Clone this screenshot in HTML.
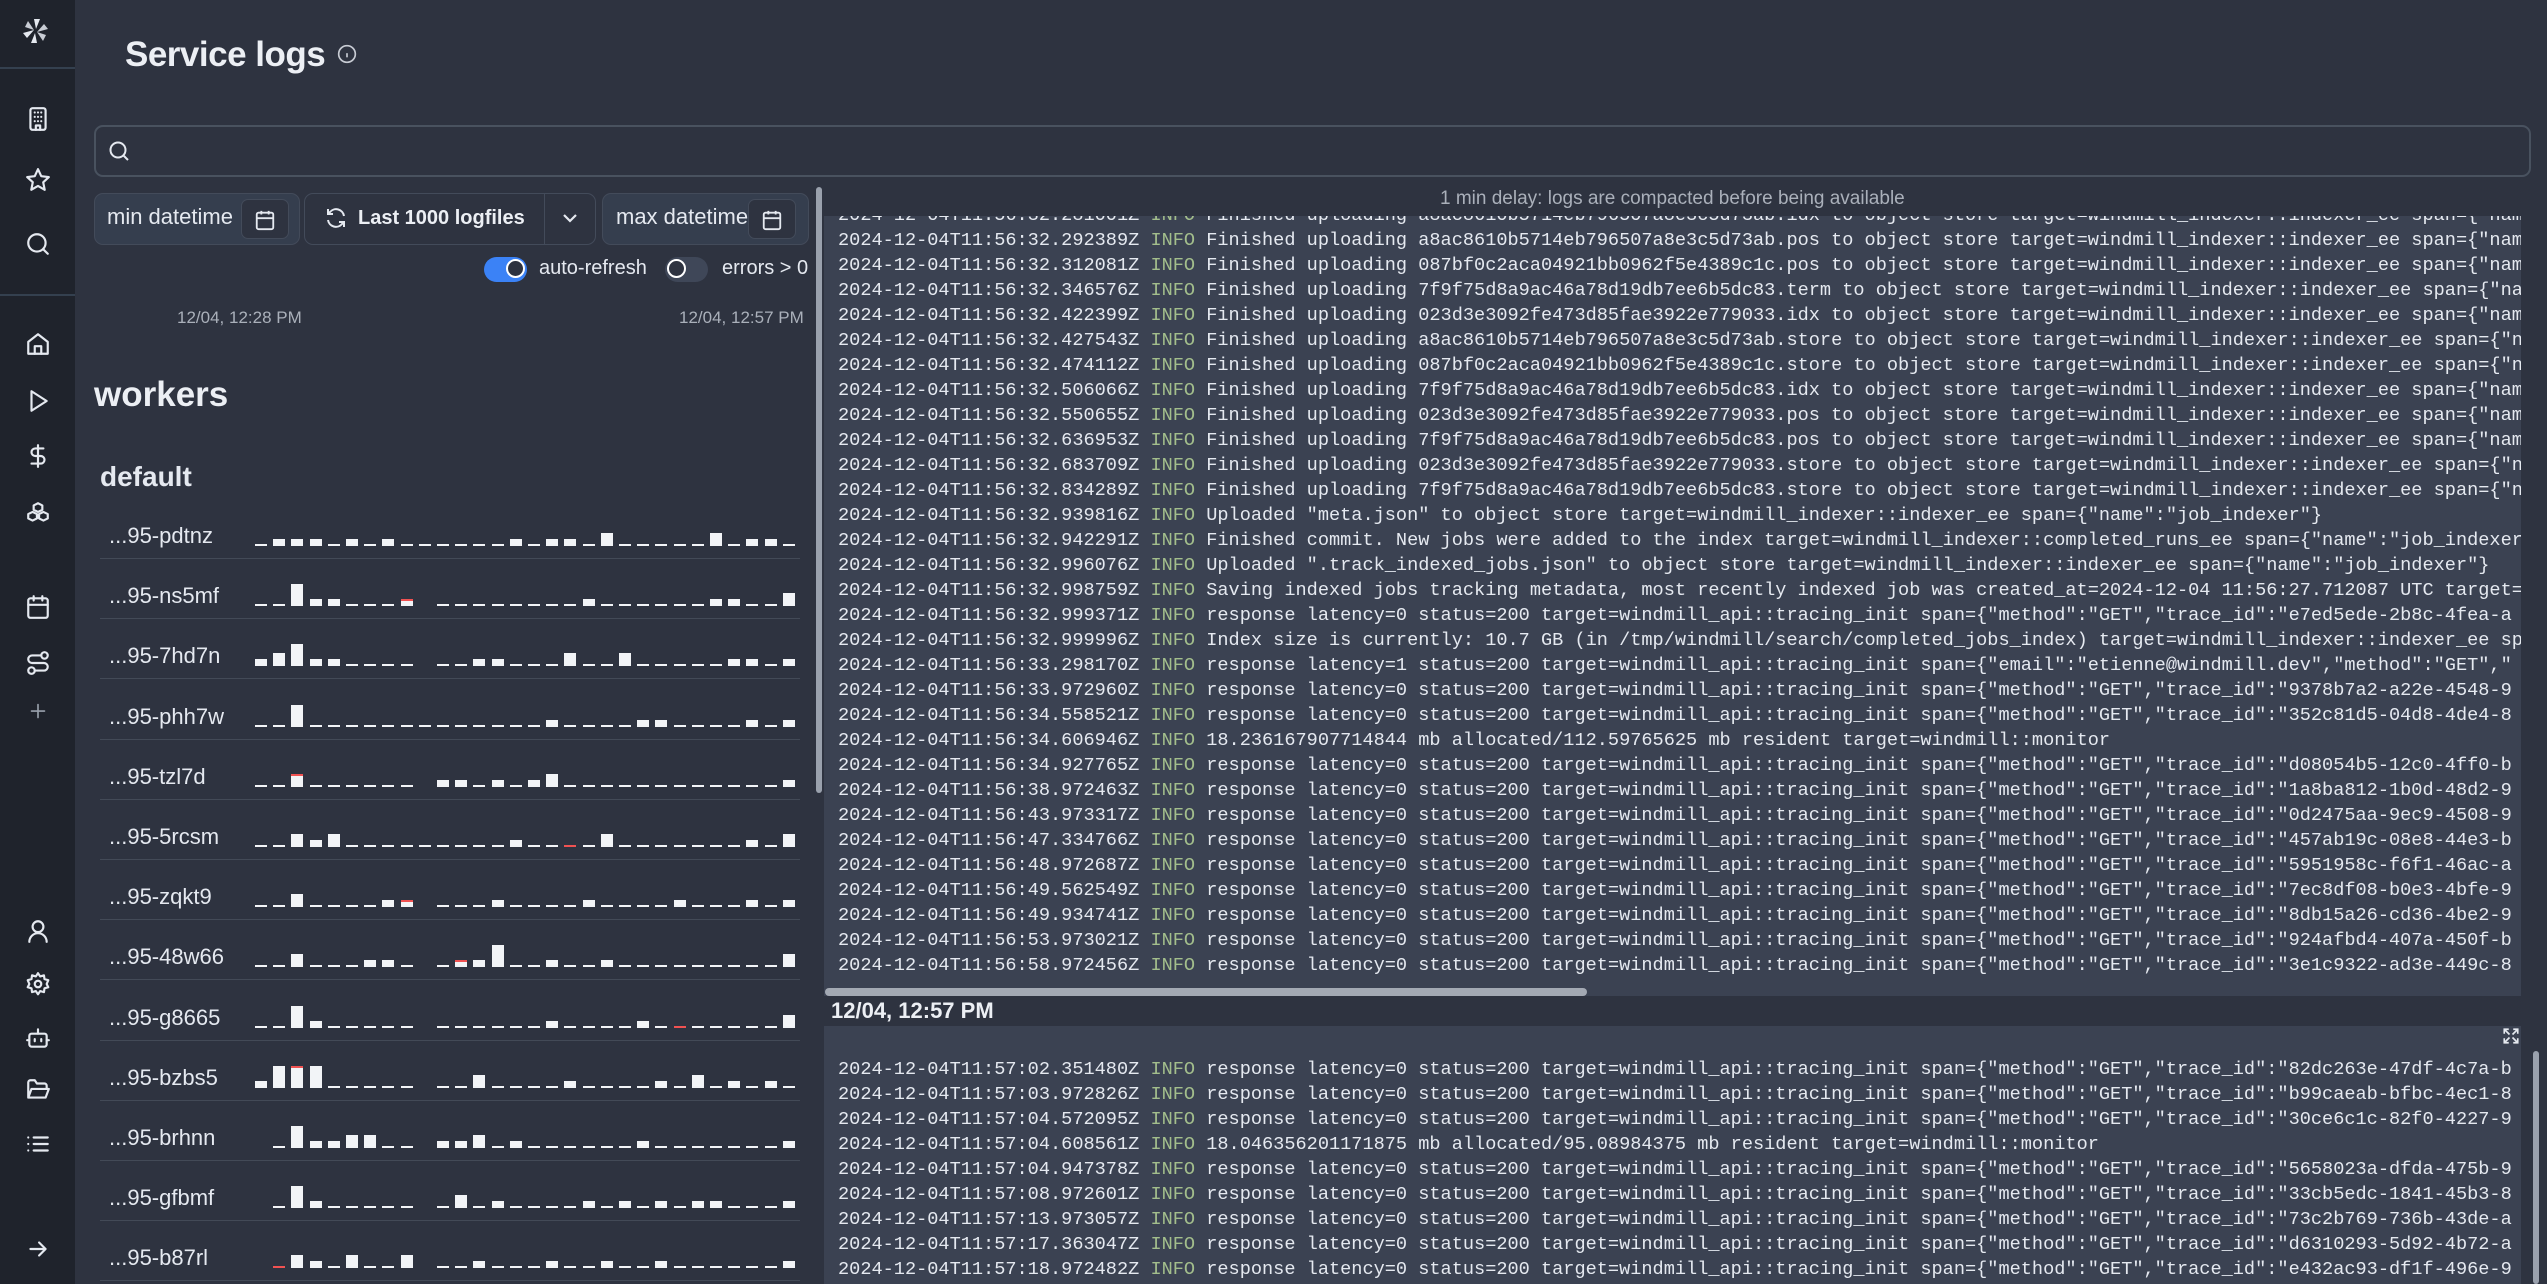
<!DOCTYPE html>
<html><head><meta charset="utf-8">
<style>
*{box-sizing:border-box;margin:0;padding:0}
html,body{width:2547px;height:1284px;overflow:hidden;background:#2e3340;font-family:"Liberation Sans",sans-serif;color:#eceff4}
#side{position:absolute;left:0;top:0;width:75px;height:1284px;background:#1f232c}
.sep{position:absolute;left:0;width:75px;height:2px;background:#34404f}
.ic{position:absolute;left:25px;width:26px;height:26px}
.ic svg{width:26px;height:26px;fill:none;stroke:#e5e9f0;stroke-width:2;stroke-linecap:round;stroke-linejoin:round}
.abs{position:absolute}
.box{position:absolute;border:1.5px solid #434b5a;border-radius:9px;background:#353e4e}
.cal{position:absolute;width:48px;height:40px;border:1.5px solid #434b5a;border-radius:7px;background:#2e3340}
.cal svg{position:absolute;left:12px;top:9px;width:22px;height:22px;fill:none;stroke:#e5e9f0;stroke-width:2}
.wname{position:absolute;left:109px;font-size:22px;color:#e5e9f0}
.wline{position:absolute;left:100px;width:700px;height:1px;background:#434a57}
.log{position:absolute;left:824px;width:1697px;background:#3b4252;overflow:hidden;font-family:"Liberation Mono",monospace;font-size:18.6px;line-height:25px;color:#e5e9f0;white-space:normal}
.log div{padding-left:14px;height:25px;white-space:pre}
.g{color:#a3be8c}
</style></head><body>
<div id="side">
 <svg class="abs" style="left:20px;top:15px" width="32" height="32" viewBox="0 0 32 32"><g fill="#e5e9f0"><path d="M14 4l6 0 -4 10z"/><path d="M24 9l4 5 -11 3z" fill="#c8ccd4"/><path d="M26 20l-3 6 -6 -9z" fill="#c8ccd4"/><path d="M17 28l-6 0 4 -10z"/><path d="M7 23l-4 -5 11 -3z"/><path d="M5 12l3 -6 6 9z" fill="#c8ccd4"/></g></svg>
 <div class="sep" style="top:67px"></div>
 <div class="ic" style="top:106px"><svg viewBox="0 0 24 24"><rect x="5" y="2" width="14" height="20" rx="2"/><path d="M9 6h0M12 6h0M15 6h0M9 10h0M12 10h0M15 10h0M9 14h0M12 14h0M15 14h0M10 22v-4h4v4"/></svg></div>
 <div class="ic" style="top:167px"><svg viewBox="0 0 24 24"><path d="M12 2l3 6.5 7 .8-5.2 4.8 1.4 7L12 17.5 5.8 21l1.4-7L2 9.3l7-.8z"/></svg></div>
 <div class="ic" style="top:231px"><svg viewBox="0 0 24 24"><circle cx="11" cy="11" r="8"/><path d="M21 21l-4.3-4.3"/></svg></div>
 <div class="sep" style="top:294px"></div>
 <div class="ic" style="top:331px"><svg viewBox="0 0 24 24"><path d="M3 10l9-7 9 7v11H3z"/><path d="M9 21v-7h6v7"/></svg></div>
 <div class="ic" style="top:388px"><svg viewBox="0 0 24 24"><path d="M6 3l14 9-14 9z"/></svg></div>
 <div class="ic" style="top:443px"><svg viewBox="0 0 24 24"><path d="M12 2v20M17 5H9.5a3.5 3.5 0 000 7h5a3.5 3.5 0 010 7H6"/></svg></div>
 <div class="ic" style="top:500px"><svg viewBox="0 0 24 24"><path d="M12 3l4 2v4l-4 2-4-2V5zM7 11l4 2v4l-4 2-4-2v-4zM17 11l4 2v4l-4 2-4-2v-4z"/></svg></div>
 <div class="ic" style="top:594px"><svg viewBox="0 0 24 24"><rect x="3" y="4" width="18" height="18" rx="2"/><path d="M16 2v4M8 2v4M3 10h18"/></svg></div>
 <div class="ic" style="top:650px"><svg viewBox="0 0 24 24"><circle cx="6" cy="19" r="3"/><circle cx="18" cy="5" r="3"/><path d="M9 19h8.5a3.5 3.5 0 000-7h-11a3.5 3.5 0 010-7H15"/></svg></div>
 <div class="ic" style="top:698px"><svg viewBox="0 0 24 24" style="stroke:#9aa1ad;stroke-width:1.5"><path d="M12 6v12M6 12h12"/></svg></div>
 <div class="ic" style="top:918px"><svg viewBox="0 0 24 24"><circle cx="12" cy="8" r="5"/><path d="M4 22a8 8 0 0116 0"/></svg></div>
 <div class="ic" style="top:971px"><svg viewBox="0 0 24 24"><circle cx="12" cy="12" r="3"/><path d="M12 2l2 3 3.5-1 .5 3.5 3.5 1-1.5 3.5 1.5 3-3.5 1-.5 3.5-3.5-1-2 3-2-3-3.5 1-.5-3.5-3.5-1 1.5-3-1.5-3.5 3.5-1 .5-3.5 3.5 1z"/></svg></div>
 <div class="ic" style="top:1025px"><svg viewBox="0 0 24 24"><rect x="4" y="8" width="16" height="12" rx="2"/><path d="M12 8V4M2 14h2M20 14h2M9 13v2M15 13v2"/></svg></div>
 <div class="ic" style="top:1077px"><svg viewBox="0 0 24 24"><path d="M3 19V5a2 2 0 012-2h4l2 3h7a2 2 0 012 2v2M3 19l3-8h16l-3 8z"/></svg></div>
 <div class="ic" style="top:1131px"><svg viewBox="0 0 24 24"><path d="M3 6h0M3 12h0M3 18h0M8 6h13M8 12h13M8 18h13"/></svg></div>
 <div class="ic" style="top:1236px"><svg viewBox="0 0 24 24"><path d="M5 12h14M13 6l6 6-6 6"/></svg></div>
</div>

<div class="abs" style="left:125px;top:35px;font-size:35px;font-weight:bold;color:#eceff4;letter-spacing:-0.5px">Service logs</div>
<svg class="abs" style="left:337px;top:44px" width="20" height="20" viewBox="0 0 24 24" fill="none" stroke="#c8ccd4" stroke-width="2"><circle cx="12" cy="12" r="10"/><path d="M12 16v-5M12 8h0"/></svg>

<div class="abs" style="left:94px;top:125px;width:2437px;height:52px;border:2.5px solid #49525f;border-radius:9px;background:#2e3340"></div>
<svg class="abs" style="left:107px;top:139px" width="24" height="24" viewBox="0 0 24 24" fill="none" stroke="#e5e9f0" stroke-width="2"><circle cx="11" cy="11" r="7.5"/><path d="M21 21l-4.5-4.5"/></svg>

<div class="box" style="left:94px;top:193px;width:206px;height:52px"></div>
<div class="abs" style="left:107px;top:204px;font-size:22px;color:#e5e9f0;width:136px;overflow:hidden;white-space:nowrap">min datetime</div>
<div class="cal" style="left:241px;top:199px"><svg viewBox="0 0 24 24"><rect x="3" y="4" width="18" height="18" rx="2"/><path d="M16 2v4M8 2v4M3 10h18"/></svg></div>

<div class="box" style="left:304px;top:193px;width:292px;height:52px;background:#2e3340"></div>
<div class="abs" style="left:544px;top:194px;width:1px;height:50px;background:#434b5a"></div>
<svg class="abs" style="left:324px;top:206px" width="24" height="24" viewBox="0 0 24 24" fill="none" stroke="#e5e9f0" stroke-width="2"><path d="M20 10a8 8 0 00-14-4l-2 2M4 3v5h5M4 14a8 8 0 0014 4l2-2M20 21v-5h-5"/></svg>
<div class="abs" style="left:358px;top:207px;font-size:20px;font-weight:bold;color:#eceff4">Last 1000 logfiles</div>
<svg class="abs" style="left:558px;top:206px" width="24" height="24" viewBox="0 0 24 24" fill="none" stroke="#e5e9f0" stroke-width="2.2"><path d="M6 9l6 6 6-6"/></svg>

<div class="box" style="left:602px;top:193px;width:207px;height:52px"></div>
<div class="abs" style="left:616px;top:204px;font-size:22px;color:#e5e9f0;width:134px;overflow:hidden;white-space:nowrap">max datetime</div>
<div class="cal" style="left:748px;top:199px"><svg viewBox="0 0 24 24"><rect x="3" y="4" width="18" height="18" rx="2"/><path d="M16 2v4M8 2v4M3 10h18"/></svg></div>

<div class="abs" style="left:484px;top:257px;width:43px;height:25px;border-radius:13px;background:#3b82f6"></div>
<div class="abs" style="left:506px;top:259px;width:19px;height:19px;border-radius:50%;border:2px solid #fff;background:#2e3340"></div>
<div class="abs" style="left:539px;top:257px;font-size:20px;color:#e5e9f0">auto-refresh</div>
<div class="abs" style="left:665px;top:257px;width:43px;height:25px;border-radius:13px;background:#3f4758"></div>
<div class="abs" style="left:667px;top:259px;width:19px;height:19px;border-radius:50%;border:2px solid #fff;background:#2e3340"></div>
<div class="abs" style="left:722px;top:257px;font-size:20px;color:#e5e9f0">errors &gt; 0</div>

<div class="abs" style="left:177px;top:308px;font-size:17px;color:#aab0ba">12/04, 12:28 PM</div>
<div class="abs" style="left:679px;top:308px;font-size:17px;color:#aab0ba">12/04, 12:57 PM</div>

<div class="abs" style="left:94px;top:375px;font-size:35px;font-weight:bold;color:#eceff4">workers</div>
<div class="abs" style="left:100px;top:461px;font-size:28px;font-weight:bold;color:#e5e9f0">default</div>

<div id="workers"></div>
<div class="abs" style="left:816px;top:187px;width:6px;height:606px;border-radius:3px;background:#9aa1ad"></div>

<div class="abs" style="left:824px;top:185px;width:1697px;height:31px;background:#2e3340"></div>
<div class="abs" style="left:1440px;top:188px;font-size:19px;color:#aab0ba">1 min delay: logs are compacted before being available</div>
<div class="log" style="top:216px;height:780px;padding-top:7px"><div style="margin-top:-20px">2024-12-04T11:56:32.281001Z <span class="g">INFO</span> Finished uploading a8ac8610b5714eb796507a8e3c5d73ab.idx to object store target=windmill_indexer::indexer_ee span={"name":"job_indexer"}</div><div>2024-12-04T11:56:32.292389Z <span class="g">INFO</span> Finished uploading a8ac8610b5714eb796507a8e3c5d73ab.pos to object store target=windmill_indexer::indexer_ee span={"name":"job_indexer"}</div><div>2024-12-04T11:56:32.312081Z <span class="g">INFO</span> Finished uploading 087bf0c2aca04921bb0962f5e4389c1c.pos to object store target=windmill_indexer::indexer_ee span={"name":"job_indexer"}</div><div>2024-12-04T11:56:32.346576Z <span class="g">INFO</span> Finished uploading 7f9f75d8a9ac46a78d19db7ee6b5dc83.term to object store target=windmill_indexer::indexer_ee span={"name":"job_indexer"}</div><div>2024-12-04T11:56:32.422399Z <span class="g">INFO</span> Finished uploading 023d3e3092fe473d85fae3922e779033.idx to object store target=windmill_indexer::indexer_ee span={"name":"job_indexer"}</div><div>2024-12-04T11:56:32.427543Z <span class="g">INFO</span> Finished uploading a8ac8610b5714eb796507a8e3c5d73ab.store to object store target=windmill_indexer::indexer_ee span={"name":"job_indexer"}</div><div>2024-12-04T11:56:32.474112Z <span class="g">INFO</span> Finished uploading 087bf0c2aca04921bb0962f5e4389c1c.store to object store target=windmill_indexer::indexer_ee span={"name":"job_indexer"}</div><div>2024-12-04T11:56:32.506066Z <span class="g">INFO</span> Finished uploading 7f9f75d8a9ac46a78d19db7ee6b5dc83.idx to object store target=windmill_indexer::indexer_ee span={"name":"job_indexer"}</div><div>2024-12-04T11:56:32.550655Z <span class="g">INFO</span> Finished uploading 023d3e3092fe473d85fae3922e779033.pos to object store target=windmill_indexer::indexer_ee span={"name":"job_indexer"}</div><div>2024-12-04T11:56:32.636953Z <span class="g">INFO</span> Finished uploading 7f9f75d8a9ac46a78d19db7ee6b5dc83.pos to object store target=windmill_indexer::indexer_ee span={"name":"job_indexer"}</div><div>2024-12-04T11:56:32.683709Z <span class="g">INFO</span> Finished uploading 023d3e3092fe473d85fae3922e779033.store to object store target=windmill_indexer::indexer_ee span={"name":"job_indexer"}</div><div>2024-12-04T11:56:32.834289Z <span class="g">INFO</span> Finished uploading 7f9f75d8a9ac46a78d19db7ee6b5dc83.store to object store target=windmill_indexer::indexer_ee span={"name":"job_indexer"}</div><div>2024-12-04T11:56:32.939816Z <span class="g">INFO</span> Uploaded "meta.json" to object store target=windmill_indexer::indexer_ee span={"name":"job_indexer"}</div><div>2024-12-04T11:56:32.942291Z <span class="g">INFO</span> Finished commit. New jobs were added to the index target=windmill_indexer::completed_runs_ee span={"name":"job_indexer"}</div><div>2024-12-04T11:56:32.996076Z <span class="g">INFO</span> Uploaded ".track_indexed_jobs.json" to object store target=windmill_indexer::indexer_ee span={"name":"job_indexer"}</div><div>2024-12-04T11:56:32.998759Z <span class="g">INFO</span> Saving indexed jobs tracking metadata, most recently indexed job was created_at=2024-12-04 11:56:27.712087 UTC target=windmill</div><div>2024-12-04T11:56:32.999371Z <span class="g">INFO</span> response latency=0 status=200 target=windmill_api::tracing_init span={"method":"GET","trace_id":"e7ed5ede-2b8c-4fea-a</div><div>2024-12-04T11:56:32.999996Z <span class="g">INFO</span> Index size is currently: 10.7 GB (in /tmp/windmill/search/completed_jobs_index) target=windmill_indexer::indexer_ee span</div><div>2024-12-04T11:56:33.298170Z <span class="g">INFO</span> response latency=1 status=200 target=windmill_api::tracing_init span={"email":"etienne@windmill.dev","method":"GET","</div><div>2024-12-04T11:56:33.972960Z <span class="g">INFO</span> response latency=0 status=200 target=windmill_api::tracing_init span={"method":"GET","trace_id":"9378b7a2-a22e-4548-9</div><div>2024-12-04T11:56:34.558521Z <span class="g">INFO</span> response latency=0 status=200 target=windmill_api::tracing_init span={"method":"GET","trace_id":"352c81d5-04d8-4de4-8</div><div>2024-12-04T11:56:34.606946Z <span class="g">INFO</span> 18.236167907714844 mb allocated/112.59765625 mb resident target=windmill::monitor</div><div>2024-12-04T11:56:34.927765Z <span class="g">INFO</span> response latency=0 status=200 target=windmill_api::tracing_init span={"method":"GET","trace_id":"d08054b5-12c0-4ff0-b</div><div>2024-12-04T11:56:38.972463Z <span class="g">INFO</span> response latency=0 status=200 target=windmill_api::tracing_init span={"method":"GET","trace_id":"1a8ba812-1b0d-48d2-9</div><div>2024-12-04T11:56:43.973317Z <span class="g">INFO</span> response latency=0 status=200 target=windmill_api::tracing_init span={"method":"GET","trace_id":"0d2475aa-9ec9-4508-9</div><div>2024-12-04T11:56:47.334766Z <span class="g">INFO</span> response latency=0 status=200 target=windmill_api::tracing_init span={"method":"GET","trace_id":"457ab19c-08e8-44e3-b</div><div>2024-12-04T11:56:48.972687Z <span class="g">INFO</span> response latency=0 status=200 target=windmill_api::tracing_init span={"method":"GET","trace_id":"5951958c-f6f1-46ac-a</div><div>2024-12-04T11:56:49.562549Z <span class="g">INFO</span> response latency=0 status=200 target=windmill_api::tracing_init span={"method":"GET","trace_id":"7ec8df08-b0e3-4bfe-9</div><div>2024-12-04T11:56:49.934741Z <span class="g">INFO</span> response latency=0 status=200 target=windmill_api::tracing_init span={"method":"GET","trace_id":"8db15a26-cd36-4be2-9</div><div>2024-12-04T11:56:53.973021Z <span class="g">INFO</span> response latency=0 status=200 target=windmill_api::tracing_init span={"method":"GET","trace_id":"924afbd4-407a-450f-b</div><div>2024-12-04T11:56:58.972456Z <span class="g">INFO</span> response latency=0 status=200 target=windmill_api::tracing_init span={"method":"GET","trace_id":"3e1c9322-ad3e-449c-8</div></div>
<div class="abs" style="left:825px;top:988px;width:762px;height:8px;border-radius:4px;background:#a3a9b3"></div>
<div class="abs" style="left:824px;top:996px;width:1697px;height:30px;background:#2e3340"></div>
<div class="abs" style="left:831px;top:998px;font-size:22px;font-weight:bold;color:#eceff4">12/04, 12:57 PM</div>
<div class="log" style="top:1026px;height:258px;padding-top:31px"><div>2024-12-04T11:57:02.351480Z <span class="g">INFO</span> response latency=0 status=200 target=windmill_api::tracing_init span={"method":"GET","trace_id":"82dc263e-47df-4c7a-b</div><div>2024-12-04T11:57:03.972826Z <span class="g">INFO</span> response latency=0 status=200 target=windmill_api::tracing_init span={"method":"GET","trace_id":"b99caeab-bfbc-4ec1-8</div><div>2024-12-04T11:57:04.572095Z <span class="g">INFO</span> response latency=0 status=200 target=windmill_api::tracing_init span={"method":"GET","trace_id":"30ce6c1c-82f0-4227-9</div><div>2024-12-04T11:57:04.608561Z <span class="g">INFO</span> 18.046356201171875 mb allocated/95.08984375 mb resident target=windmill::monitor</div><div>2024-12-04T11:57:04.947378Z <span class="g">INFO</span> response latency=0 status=200 target=windmill_api::tracing_init span={"method":"GET","trace_id":"5658023a-dfda-475b-9</div><div>2024-12-04T11:57:08.972601Z <span class="g">INFO</span> response latency=0 status=200 target=windmill_api::tracing_init span={"method":"GET","trace_id":"33cb5edc-1841-45b3-8</div><div>2024-12-04T11:57:13.973057Z <span class="g">INFO</span> response latency=0 status=200 target=windmill_api::tracing_init span={"method":"GET","trace_id":"73c2b769-736b-43de-a</div><div>2024-12-04T11:57:17.363047Z <span class="g">INFO</span> response latency=0 status=200 target=windmill_api::tracing_init span={"method":"GET","trace_id":"d6310293-5d92-4b72-a</div><div>2024-12-04T11:57:18.972482Z <span class="g">INFO</span> response latency=0 status=200 target=windmill_api::tracing_init span={"method":"GET","trace_id":"e432ac93-df1f-496e-9</div></div>
<svg class="abs" style="left:2502px;top:1027px" width="18" height="18" viewBox="0 0 24 24" fill="none" stroke="#e5e9f0" stroke-width="2.2"><path d="M15 3h6v6M9 21H3v-6M21 3l-7 7M3 21l7-7M9 3H3v6M15 21h6v-6M3 3l7 7M21 21l-7-7"/></svg>
<div class="abs" style="left:2533px;top:1051px;width:6px;height:233px;border-radius:3px;background:#9aa1ad"></div>

<script>
var rows=[
["pdtnz","122212121111112122131111131221"],
["ns5mf","114221112011111111211111122113",[8]],
["7hd7n","234221111011221113113111112212"],
["phh7w","114111111111111121111221111212"],
["tzl7d","113111111022121231111111111112",[2]],
["5rcsm","113231111111112111131111111213",[17]],
["zqkt9","113111122011121111211112111212",[8]],
["48w66","113111221012241121121111111113",[11]],
["g8665","114211111011111121111211111113",[23]],
["bzbs5","244411111011311112111121312121",[2]],
["brhnn","014223311022312111111211111112"],
["gfbmf","014211111013121111212121221112"],
["b87rl","013213113011211121121121111112",[1]]
];
var hmap={0:0,1:2,2:7,3:13,4:22};
var out="";
rows.forEach(function(r,i){
 var cy=536+i*60.2;
 out+='<div class="wname" style="top:'+(cy-13)+'px">...95-'+r[0]+'</div>';
 out+='<div class="wline" style="top:'+(cy+22)+'px"></div>';
 var s=r[1];
 for(var j=0;j<30;j++){
  var h=hmap[s[j]]; if(!h) continue;
  var x=255+j*18.2;
  var red=r[2]&&r[2].indexOf(j)>=0;
  out+='<div class="abs" style="left:'+x.toFixed(1)+'px;top:'+(cy+10-h)+'px;width:12px;height:'+h+'px;background:#f2f4f7;'+(red?'border-top:2px solid #f05252':'')+'"></div>';
 }
});
document.getElementById("workers").innerHTML=out;
</script>
</body></html>
